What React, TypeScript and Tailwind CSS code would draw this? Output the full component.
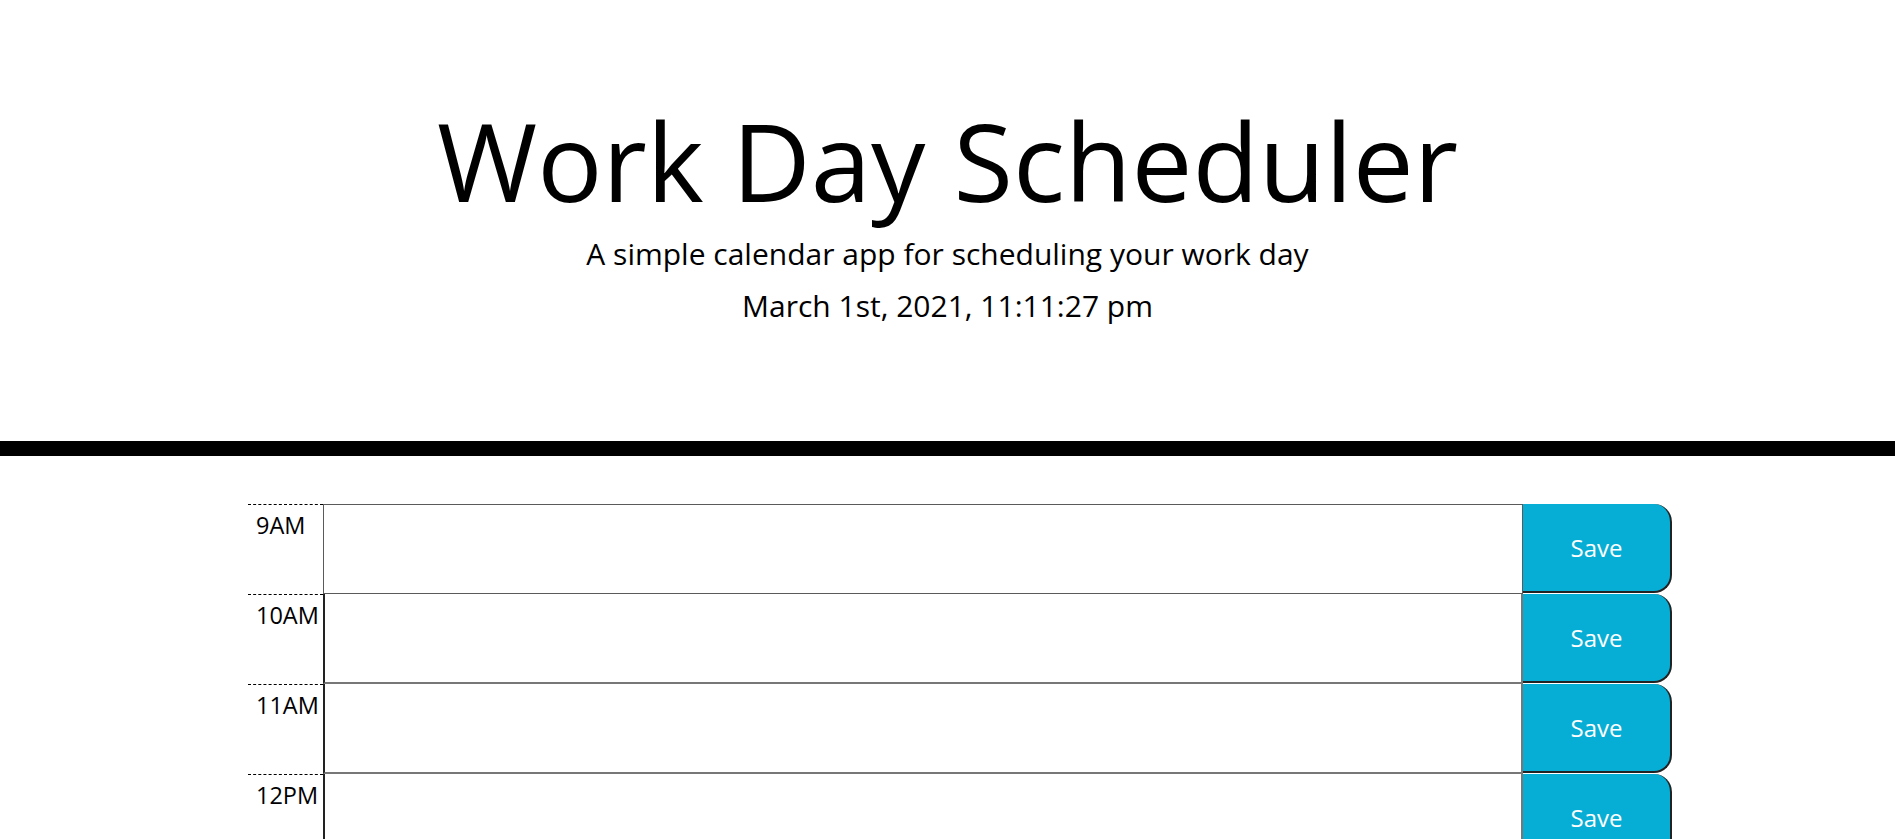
import React from "react";

const hours = ["9AM", "10AM", "11AM", "12PM", "1PM", "2PM", "3PM", "4PM", "5PM"];

export default function App() {
  return (
    <div className="min-h-screen bg-white text-black" style={{ fontFamily: '"Open Sans", "Liberation Sans", sans-serif' }}>
      <header className="flex flex-col items-center pt-[94px]">
        <h1 className="text-[108.5px] leading-[132px] font-normal">Work Day Scheduler</h1>
        <p className="mt-[4.5px] text-[30px] leading-[45px] font-normal">A simple calendar app for scheduling your work day</p>
        <p className="mt-[7.6px] text-[30px] leading-[45px] font-normal">March 1st, 2021, 11:11:27 pm</p>
      </header>
      <div className="mt-[113px] h-[15px] bg-black" />
      <main className="pt-[48px] pl-[248px]">
        {hours.map((h, i) => (
          <div key={h} className="flex h-[90px]">
            <div className="w-[75px] border-t border-dashed border-black pt-[3px] pl-[8px] text-left text-[23.5px] leading-[35px]">
              {h}
            </div>
            {i === 0 ? (
              <textarea className="w-[1200px] h-[90px] resize-none border border-[#5a5a5a] bg-transparent p-[10px] outline-none" />
            ) : (
              <textarea className="w-[1200px] h-[90px] resize-none border-l-2 border-l-[#222] border-r-2 border-r-[#777] border-b-2 border-b-[#777] bg-transparent p-[10px] outline-none" />
            )}
            <button className="w-[149px] h-[89px] pt-[1px] bg-[#06AED5] text-white text-[24px] rounded-r-[18px] border-r-2 border-b-2 border-[#222]">
              Save
            </button>
          </div>
        ))}
      </main>
    </div>
  );
}
